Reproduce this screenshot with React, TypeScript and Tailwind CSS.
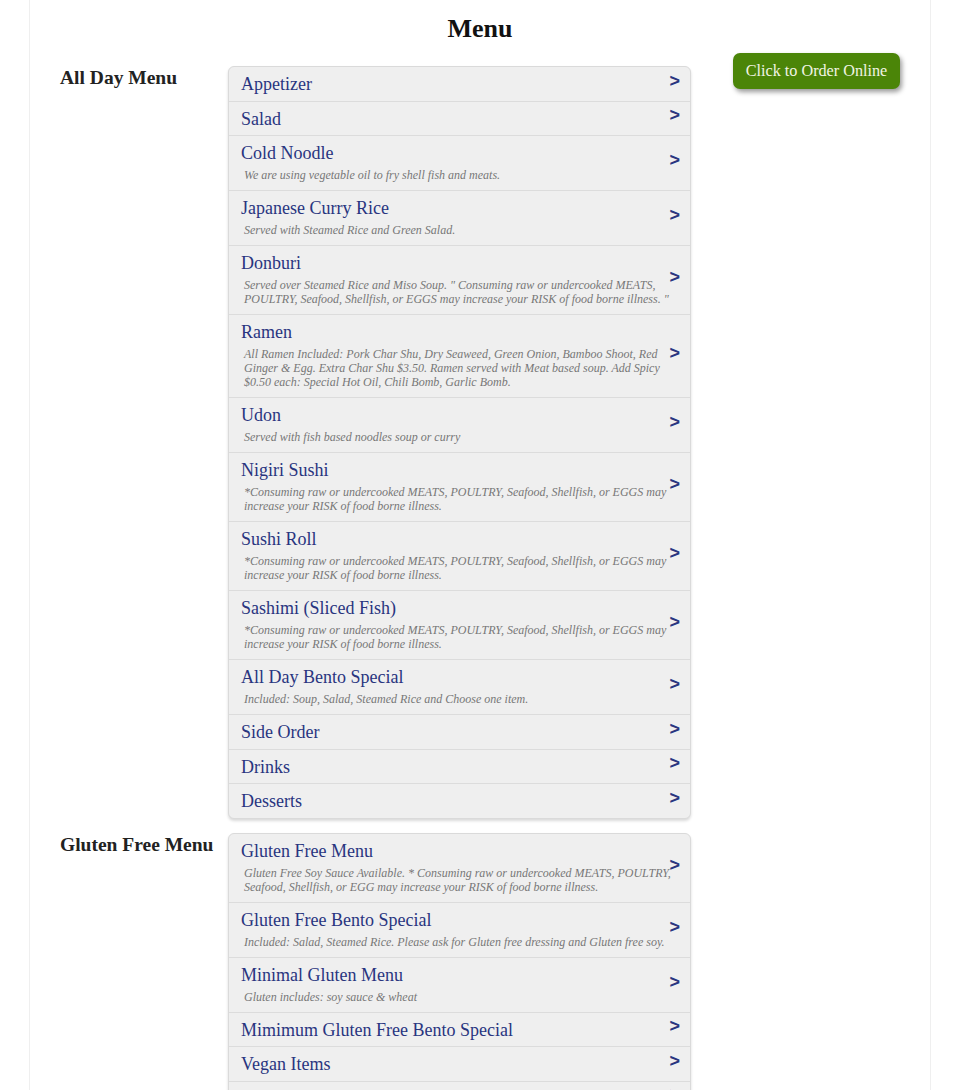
import React from "react";

type Item = { title: string; desc?: string };

const allDay: Item[] = [
  { title: "Appetizer" },
  { title: "Salad" },
  { title: "Cold Noodle", desc: "We are using vegetable oil to fry shell fish and meats." },
  { title: "Japanese Curry Rice", desc: "Served with Steamed Rice and Green Salad." },
  {
    title: "Donburi",
    desc: 'Served over Steamed Rice and Miso Soup. " Consuming raw or undercooked MEATS, POULTRY, Seafood, Shellfish, or EGGS may increase your RISK of food borne illness. "',
  },
  {
    title: "Ramen",
    desc: "All Ramen Included: Pork Char Shu, Dry Seaweed, Green Onion, Bamboo Shoot, Red Ginger & Egg. Extra Char Shu $3.50. Ramen served with Meat based soup. Add Spicy $0.50 each: Special Hot Oil, Chili Bomb, Garlic Bomb.",
  },
  { title: "Udon", desc: "Served with fish based noodles soup or curry" },
  {
    title: "Nigiri Sushi",
    desc: "*Consuming raw or undercooked MEATS, POULTRY, Seafood, Shellfish, or EGGS may increase your RISK of food borne illness.",
  },
  {
    title: "Sushi Roll",
    desc: "*Consuming raw or undercooked MEATS, POULTRY, Seafood, Shellfish, or EGGS may increase your RISK of food borne illness.",
  },
  {
    title: "Sashimi (Sliced Fish)",
    desc: "*Consuming raw or undercooked MEATS, POULTRY, Seafood, Shellfish, or EGGS may increase your RISK of food borne illness.",
  },
  { title: "All Day Bento Special", desc: "Included: Soup, Salad, Steamed Rice and Choose one item." },
  { title: "Side Order" },
  { title: "Drinks" },
  { title: "Desserts" },
];

const glutenFree: Item[] = [
  {
    title: "Gluten Free Menu",
    desc: "Gluten Free Soy Sauce Available. * Consuming raw or undercooked MEATS, POULTRY, Seafood, Shellfish, or EGG may increase your RISK of food borne illness.",
  },
  {
    title: "Gluten Free Bento Special",
    desc: "Included: Salad, Steamed Rice. Please ask for Gluten free dressing and Gluten free soy.",
  },
  { title: "Minimal Gluten Menu", desc: "Gluten includes: soy sauce & wheat" },
  { title: "Mimimum Gluten Free Bento Special" },
  { title: "Vegan Items" },
  { title: "Vegan Bento Special" },
];

function Row({ item, first }: { item: Item; first: boolean }) {
  return (
    <div
      className={
        "relative pl-3 pr-[14px] pt-[7px] pb-[5px] " +
        (first ? "" : "border-t border-[#dcdcdc]")
      }
    >
      <div className="text-[18px] leading-[21.5px] text-[#29357f]">{item.title}</div>
      {item.desc && (
        <div className="ml-[3px] mt-[3.5px] mb-[3px] text-[12px] leading-[14px] italic text-[#777777]">
          {item.desc}
        </div>
      )}
      <div className="absolute inset-y-0 right-[10px] flex items-center pb-[6px]">
        <span
          className="text-[18px] font-bold leading-none text-[#29357f]"
          style={{ fontFamily: '"Liberation Sans", Arial, sans-serif' }}
        >
          &gt;
        </span>
      </div>
    </div>
  );
}

function Section({ heading, items }: { heading: string; items: Item[] }) {
  return (
    <div className="flex">
      <div className="w-[168px] shrink-0 pt-[1px] text-[19.5px] font-bold leading-[22px] text-[#222]">
        {heading}
      </div>
      <div className="w-[463px] shrink-0 overflow-hidden rounded-[6px] border border-[#dadada] bg-[#efefef] shadow-[0_2px_3px_rgba(0,0,0,0.15)]">
        {items.map((it, i) => (
          <Row key={it.title} item={it} first={i === 0} />
        ))}
      </div>
    </div>
  );
}

export default function App() {
  return (
    <div
      className="min-h-[1090px] bg-white"
      style={{ fontFamily: '"Liberation Serif", "Times New Roman", serif' }}
    >
      <div className="mx-[29px] min-h-[1090px] border-x border-[#efefef]">
        <h1 className="pt-[14px] text-center text-[26px] font-bold leading-[30px] text-[#111]">
          Menu
        </h1>
        <div className="mt-[9px] flex">
          <div className="flex flex-col gap-[14px] pl-[30px] pt-[13px]">
            <Section heading="All Day Menu" items={allDay} />
            <Section heading="Gluten Free Menu" items={glutenFree} />
          </div>
          <div className="ml-[42px]">
            <button className="w-[167px] rounded-[7px] bg-[#4b8508] py-[7px] text-center text-[16.2px] leading-[22px] text-[#f1f4e4] shadow-[2px_3px_5px_rgba(0,0,0,0.4)]">
              Click to Order Online
            </button>
          </div>
        </div>
      </div>
    </div>
  );
}
